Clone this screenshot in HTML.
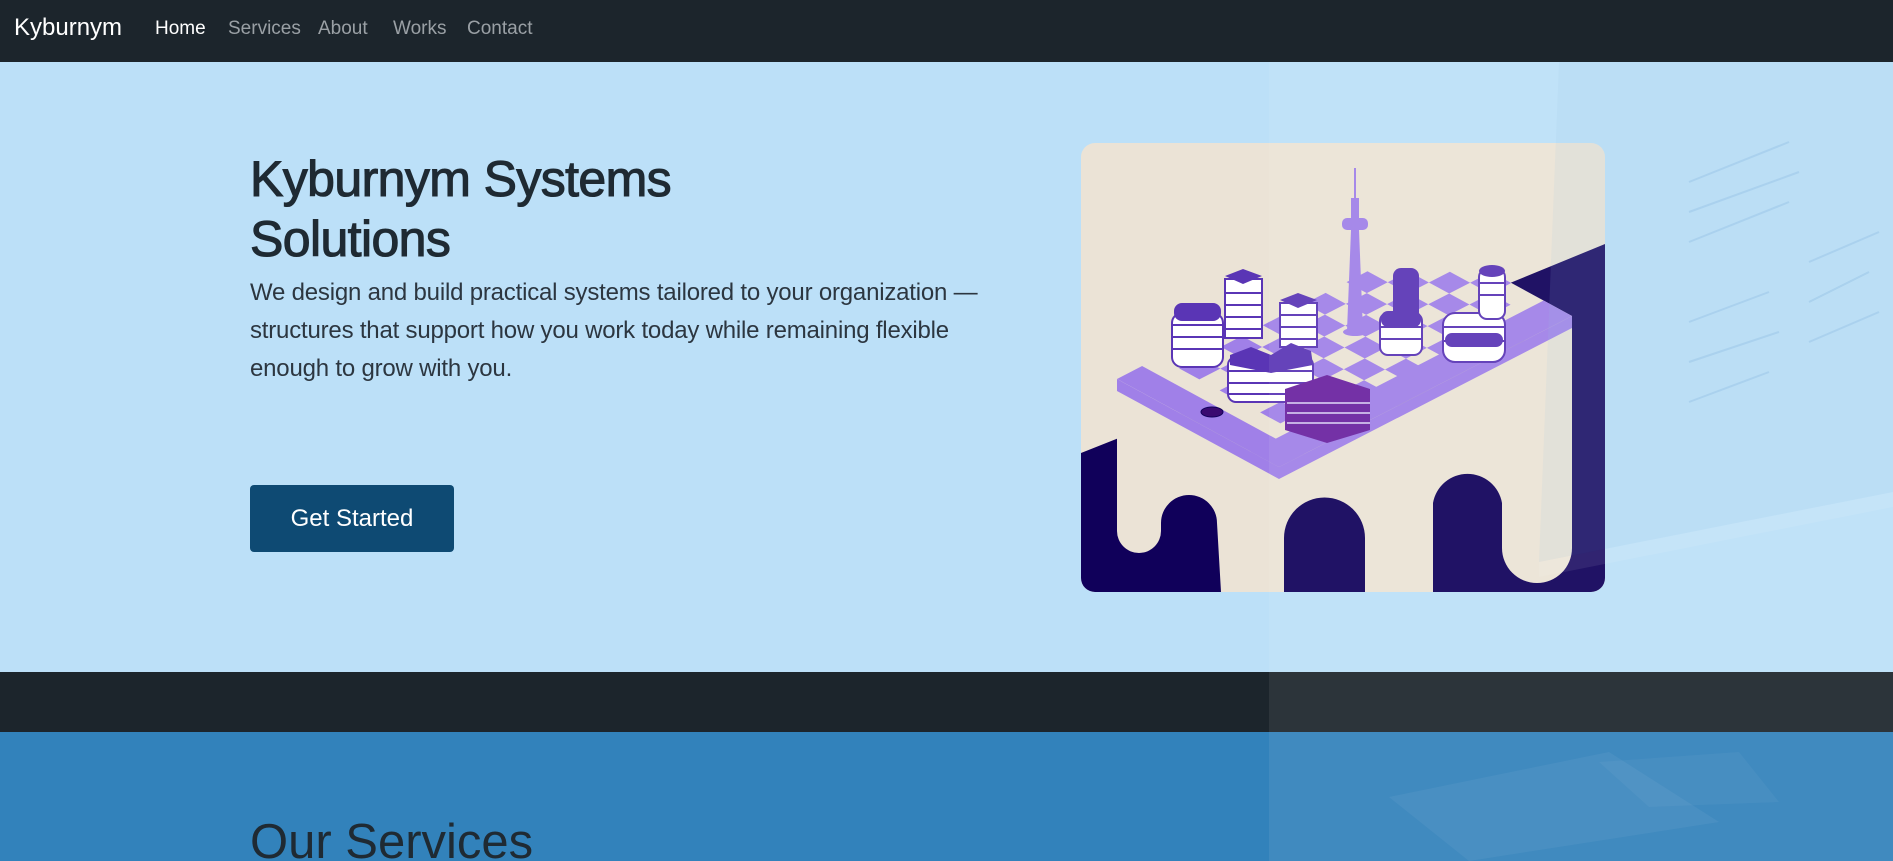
<!DOCTYPE html>
<html><head><meta charset="utf-8"><style>
*{margin:0;padding:0;box-sizing:border-box}
html,body{width:1893px;height:861px;overflow:hidden;font-family:"Liberation Sans",sans-serif}
body{position:relative;background:#3282bb}
.nav{position:absolute;left:0;top:0;width:1893px;height:62px;background:#1c252c}
.nav span{position:absolute;top:18px;font-size:19px;color:#9aa0a5}
.brand{left:14px!important;top:14px!important;font-size:24px!important;color:#fff!important}
.hero{position:absolute;left:0;top:62px;width:1893px;height:610px;background:#bce0f8}
.band{position:absolute;left:0;top:672px;width:1893px;height:60px;background:#1c252c}
h1{position:absolute;left:250px;top:149px;font-size:50px;line-height:60px;font-weight:normal;color:#1f2a33;-webkit-text-stroke:1.1px #1f2a33;letter-spacing:-0.6px}
p{position:absolute;left:250px;top:274px;font-size:24px;line-height:38px;color:#2c3640;letter-spacing:-0.2px}
.btn{position:absolute;left:250px;top:485px;width:204px;height:67px;background:#0e4a73;border-radius:4px;color:#fff;font-size:24px;text-align:center;line-height:67px}
.card{position:absolute;left:1081px;top:143px;width:524px;height:449px;border-radius:14px;overflow:hidden}
h2{position:absolute;left:250px;top:812px;font-size:49px;font-weight:normal;color:#1f2a33;line-height:60px}
.ov{position:absolute;left:1269px;top:62px;width:624px;height:799px}
</style></head><body>
<div class="nav">
<span class="brand">Kyburnym</span>
<span style="left:155px;color:#fff">Home</span>
<span style="left:228px">Services</span>
<span style="left:318px">About</span>
<span style="left:393px">Works</span>
<span style="left:467px">Contact</span>
</div>
<div class="hero"></div>
<div class="band"></div>
<h1>Kyburnym Systems<br>Solutions</h1>
<p>We design and build practical systems tailored to your organization —<br>structures that support how you work today while remaining flexible<br>enough to grow with you.</p>
<div class="btn">Get Started</div>
<div class="card">
<svg width="524" height="449" viewBox="0 0 524 449">
<rect width="524" height="449" fill="#ebe3d6"/>
<polygon points="0,310 429,140 524,101 524,449 0,449" fill="#10005a"/>
<path d="M36,236 L198,324 L491,173 L491,405 A35,35 0 0 1 421,405 L421,360 A35,35 0 0 0 352,360 L352,449 L284,449 L284,395 A40,40 0 0 0 203,395 L203,449 L140,449 L136,380 A28,28 0 0 0 80,380 L80,388 A22,22 0 0 1 36,388 Z" fill="#ebe3d6"/>
<polygon points="36,236 198,324 491,173 491,185 198,336 36,248" fill="#a080e8"/>
<g transform="matrix(20.25,11,20.93,-10.79,36,236)">
<polygon points="0,0 8,0 8,14 0,14" fill="#ebe3d6"/>
<polygon points="6.6,0 8,0 8,14 6.6,14" fill="#a080e8"/>
<polygon points="0,0 8,0 8,1.2 0,1.2" fill="#a080e8"/>
<g fill="#a080e8">
<rect x="1" y="2" width="1" height="1"/><rect x="3" y="2" width="1" height="1"/><rect x="5" y="2" width="1" height="1"/>
<rect x="2" y="3" width="1" height="1"/><rect x="4" y="3" width="1" height="1"/><rect x="6" y="3" width="1" height="1"/>
<rect x="1" y="4" width="1" height="1"/><rect x="3" y="4" width="1" height="1"/><rect x="5" y="4" width="1" height="1"/>
<rect x="2" y="5" width="1" height="1"/><rect x="4" y="5" width="1" height="1"/><rect x="6" y="5" width="1" height="1"/>
<rect x="1" y="6" width="1" height="1"/><rect x="3" y="6" width="1" height="1"/><rect x="5" y="6" width="1" height="1"/>
<rect x="2" y="7" width="1" height="1"/><rect x="4" y="7" width="1" height="1"/><rect x="6" y="7" width="1" height="1"/>
<rect x="1" y="8" width="1" height="1"/><rect x="3" y="8" width="1" height="1"/><rect x="5" y="8" width="1" height="1"/>
<rect x="2" y="9" width="1" height="1"/><rect x="4" y="9" width="1" height="1"/><rect x="6" y="9" width="1" height="1"/>
<rect x="1" y="10" width="1" height="1"/><rect x="3" y="10" width="1" height="1"/><rect x="5" y="10" width="1" height="1"/>
<rect x="2" y="11" width="1" height="1"/><rect x="4" y="11" width="1" height="1"/><rect x="6" y="11" width="1" height="1"/>
<rect x="3" y="12" width="1" height="1"/><rect x="5" y="12" width="1" height="1"/>
<rect x="4" y="13" width="1" height="1"/>
</g></g>
<g stroke="#5a35b5" stroke-width="2">
<rect x="91" y="170" width="51" height="54" rx="10" fill="#fff" />
<line x1="91" y1="182" x2="142" y2="182"/><line x1="91" y1="194" x2="142" y2="194"/><line x1="91" y1="206" x2="142" y2="206"/>
<rect x="144" y="136" width="37" height="59" fill="#fff"/>
<line x1="144" y1="150" x2="181" y2="150"/><line x1="144" y1="162" x2="181" y2="162"/><line x1="144" y1="174" x2="181" y2="174"/><line x1="144" y1="186" x2="181" y2="186"/>
<rect x="199" y="160" width="37" height="44" fill="#fff"/>
<line x1="199" y1="172" x2="236" y2="172"/><line x1="199" y1="184" x2="236" y2="184"/><line x1="199" y1="196" x2="236" y2="196"/>
<rect x="147" y="214" width="85" height="45" rx="8" fill="#fff"/>
<line x1="147" y1="228" x2="232" y2="228"/><line x1="147" y1="240" x2="232" y2="240"/><line x1="147" y1="251" x2="232" y2="251"/>
<rect x="299" y="170" width="42" height="42" rx="8" fill="#fff"/>
<line x1="299" y1="184" x2="341" y2="184"/><line x1="299" y1="196" x2="341" y2="196"/>
<rect x="362" y="170" width="62" height="49" rx="12" fill="#fff"/>
<line x1="362" y1="184" x2="424" y2="184"/><line x1="362" y1="198" x2="424" y2="198"/>
<rect x="398" y="126" width="26" height="50" rx="8" fill="#fff"/>
<line x1="398" y1="140" x2="424" y2="140"/><line x1="398" y1="152" x2="424" y2="152"/>
</g>
<g fill="#5a35b5">
<rect x="93" y="160" width="47" height="18" rx="8"/>
<polygon points="144,133 162,126 181,133 162,141"/>
<polygon points="199,157 217,150 236,157 217,165"/>
<path d="M149,212 L170,204 L190,212 L210,200 L230,208 L232,222 L190,230 L149,222 Z"/>
<rect x="312" y="125" width="26" height="52" rx="8"/>
<rect x="300" y="168" width="40" height="16" rx="7"/>
<ellipse cx="411" cy="128" rx="13" ry="6"/>
<rect x="364" y="190" width="58" height="14" rx="7"/>
<path d="M204,246 L246,232 L289,246 L289,287 L246,300 L204,287 Z" fill="#6a22a0"/>
<ellipse cx="131" cy="269" rx="11" ry="5" fill="#3a0a70" stroke="#10005a"/>
</g>
<g stroke="#e0d8f8" stroke-width="1.5"><line x1="206" y1="260" x2="289" y2="260"/><line x1="206" y1="270" x2="289" y2="270"/><line x1="206" y1="280" x2="289" y2="280"/></g>
<g fill="#a080e8">
<rect x="273" y="25" width="2" height="30"/><rect x="270" y="55" width="8" height="22"/>
<rect x="261" y="75" width="26" height="12" rx="5"/>
<polygon points="270,87 278,87 282,188 266,188"/>
<ellipse cx="274" cy="189" rx="12" ry="4"/>
</g>
</svg>
</div>
<svg class="ov" width="624" height="799" viewBox="0 0 624 799">
<rect width="624" height="799" fill="#ffffff" fill-opacity="0.07"/>
<polygon points="290,0 624,0 624,430 270,500" fill="#9fc4e4" fill-opacity="0.12"/>
<polygon points="270,500 624,430 624,445 270,515" fill="#ffffff" fill-opacity="0.08"/>
<g stroke="#6a9fd0" stroke-opacity="0.2" stroke-width="2">
<line x1="420" y1="120" x2="520" y2="80"/><line x1="420" y1="150" x2="530" y2="110"/><line x1="420" y1="180" x2="520" y2="140"/>
<line x1="540" y1="200" x2="610" y2="170"/><line x1="540" y1="240" x2="600" y2="210"/><line x1="540" y1="280" x2="610" y2="250"/>
<line x1="420" y1="260" x2="500" y2="230"/><line x1="420" y1="300" x2="510" y2="270"/><line x1="420" y1="340" x2="500" y2="310"/>
</g>
<polygon points="120,735 340,690 450,760 200,799" fill="#ffffff" fill-opacity="0.05"/>
<polygon points="330,700 470,690 510,740 380,745" fill="#ffffff" fill-opacity="0.04"/>
</svg>
<h2>Our Services</h2>
</body></html>
